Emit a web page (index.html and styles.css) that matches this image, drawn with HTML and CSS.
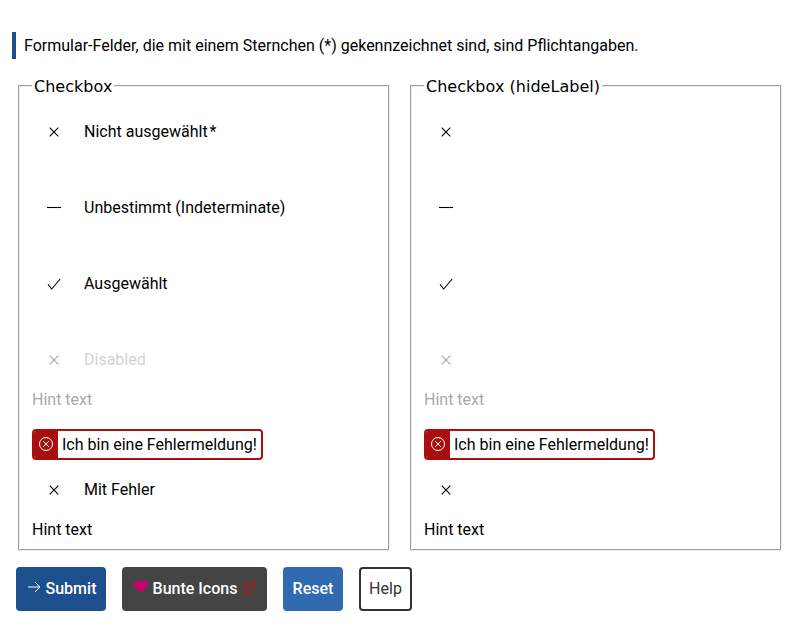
FILE: index.html
```html
<!DOCTYPE html>
<html lang="de">
<head>
<meta charset="utf-8">
<title>Checkbox</title>
<link rel="stylesheet" href="styles.css">
</head>
<body>
<svg class="sprite" aria-hidden="true">
  <symbol id="x" viewBox="0 0 16 16"><path d="M3.700 3.700l8.600 8.600M12.300 3.700l-8.600 8.600"/></symbol>
  <symbol id="minus" viewBox="0 0 16 16"><path d="M1 7.500h14"/></symbol>
  <symbol id="check" viewBox="0 0 16 16"><path d="M2 8.300l3.700 4.700L14.200 3"/></symbol>
</svg>
<main>
  <p class="note">Formular-Felder, die mit einem Sternchen (*) gekennzeichnet sind, sind Pflichtangaben.</p>
  <div class="groups">
    <fieldset>
      <legend><span>Checkbox</span></legend>
      <div class="row"><svg><use href="#x"/></svg><span>Nicht ausgewählt<span class="req">*</span></span></div>
      <div class="row"><svg><use href="#minus"/></svg><span>Unbestimmt (Indeterminate)</span></div>
      <div class="row"><svg><use href="#check"/></svg><span>Ausgewählt</span></div>
      <div class="row off"><svg><use href="#x"/></svg><span>Disabled</span></div>
      <div class="hint muted">Hint text</div>
      <div class="error"><span class="mark"><svg viewBox="0 0 14 14"><circle cx="7" cy="7" r="6.500"/><path d="M4.200 4.200l5.600 5.600M9.800 4.200l-5.600 5.600"/></svg></span><span class="msg">Ich bin eine Fehlermeldung!</span></div>
      <div class="row last"><svg><use href="#x"/></svg><span>Mit Fehler</span></div>
      <div class="hint">Hint text</div>
    </fieldset>
    <fieldset>
      <legend><span>Checkbox (hideLabel)</span></legend>
      <div class="row"><svg><use href="#x"/></svg></div>
      <div class="row"><svg><use href="#minus"/></svg></div>
      <div class="row"><svg><use href="#check"/></svg></div>
      <div class="row off"><svg><use href="#x"/></svg></div>
      <div class="hint muted">Hint text</div>
      <div class="error"><span class="mark"><svg viewBox="0 0 14 14"><circle cx="7" cy="7" r="6.500"/><path d="M4.200 4.200l5.600 5.600M9.800 4.200l-5.600 5.600"/></svg></span><span class="msg">Ich bin eine Fehlermeldung!</span></div>
      <div class="row last"><svg><use href="#x"/></svg></div>
      <div class="hint">Hint text</div>
    </fieldset>
  </div>
  <div class="actions">
    <button class="primary"><svg class="arrow" viewBox="0 0 14 14"><path d="M1 7h12M8 2l5 5-5 5"/></svg><span>Submit</span></button>
    <button class="dark"><svg class="heart" viewBox="0 0 14 14"><path d="M7 13L1.200 7C-.4 5.200-.1 2.400 1.500 1.200 3.200 0 5.500.4 7 2.300 8.500.4 10.800 0 12.500 1.200 14.100 2.400 14.400 5.200 12.800 7Z"/></svg><span>Bunte Icons</span><svg class="squirrel" viewBox="0 0 14 14"><path d="M.5 4.500L2.300 2.800 3.300 1.200l1.200 1.600C6 3.500 6 5 5 6.200L7.200 8.500 9.500 7.200 9.700 5.500 7.500 4.800 7 2.500 9 .8h3.500l1.200 1.800-1 2-1.700-.2 1 3-.8 4.400-1.300 1.500H2.500L2 12l2.500-1L3.500 9.200 1.200 9.600.8 8.500 3 8V6.300H1.200Z"/></svg></button>
    <button class="secondary">Reset</button>
    <button class="outline">Help</button>
  </div>
</main>
</body>
</html>
```
FILE: styles.css
```css
* { box-sizing: border-box; }
body { margin: 0; background: #fff; color: #000; font: 16px/20px Roboto, sans-serif; }
.sprite { display: none; }
main { padding: 32px 18px 0; }
.note { margin: 0 0 0 -6px; height: 27px; line-height: 27px; padding-left: 8px; border-left: 4px solid #1c4f8c; }
.groups { display: grid; grid-template-columns: 372px 372px; gap: 20px; margin-top: 17px; }
fieldset { margin: 0; min-width: 0; height: 475px; padding: 0 12px; border: 2px groove #f0f0f0; }
legend { height: 20px; padding: 0 2px; font: 16px/22px "DejaVu Sans", sans-serif; letter-spacing: .03px; white-space: nowrap; }
.row { display: flex; align-items: center; height: 44px; margin: 14px 0 32px; padding-left: 14px; }
.row svg { width: 16px; height: 16px; margin-right: 22px; fill: none; stroke: #000; stroke-width: 1.1; }
.req { margin-left: 2px; }
.row.off { margin-bottom: 8px; }
.off span { opacity: .18; }
.off svg { opacity: .35; }
.muted { opacity: .35; }
.hint { height: 20px; }
.error { display: flex; width: 231px; height: 31px; margin-top: 19px; border: 2px solid #a90f0f; border-radius: 4px; overflow: hidden; }
.mark { display: flex; width: 24px; background: #a90f0f; align-items: center; padding: 0 0 1px 5px; }
.mark svg { width: 14px; height: 14px; fill: none; stroke: #fff; }
.msg { padding-left: 4px; line-height: 27px; white-space: nowrap; }
.row.last { margin: 8px 0; }
.actions { display: flex; gap: 16px; margin: 16px 0 0 -2px; }
button { display: flex; align-items: center; justify-content: center; gap: 5px; height: 44px; padding: 0; border: 0; border-radius: 4px; color: #fff; font: 500 16px/20px Roboto, sans-serif; white-space: nowrap; }
button svg { width: 14px; height: 14px; fill: none; stroke: #fff; margin-bottom: 5px; }
.primary { width: 90px; padding-left: 1px; background: #1c4f8c; }
.dark { width: 145px; padding-left: 1px; background: #444; }
.secondary { width: 60px; background: #306ab0; }
.outline { width: 53px; background: #fff; border: 2px solid #333; color: #333; font-weight: 400; }
button .heart { fill: #cb0070; stroke: none; }
button .squirrel { stroke: #d80c0c; stroke-width: .8; }
```
